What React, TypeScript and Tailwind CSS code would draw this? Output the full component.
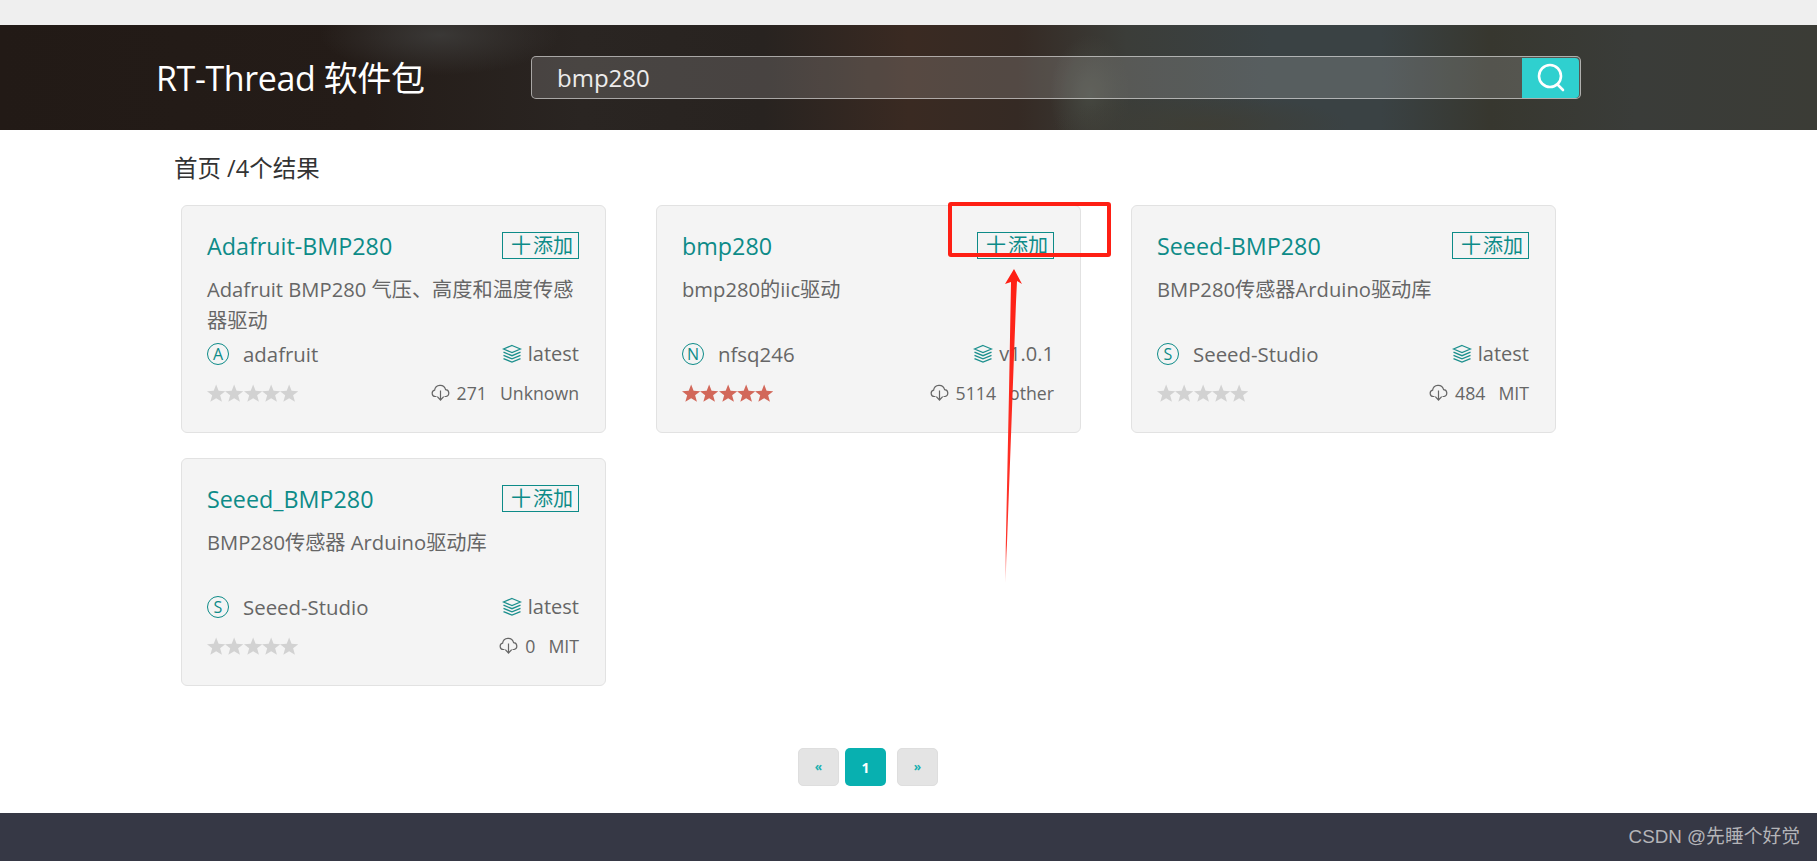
import React from "react";

const FONT = "font-['Open_Sans','Noto_Sans_CJK_SC',sans-serif]";

function Star({ color }: { color: string }) {
  return (
    <svg width="18.3" height="19" viewBox="0 0 18 18" className="block shrink-0">
      <path d="M9 .2l2.4 6.2 6.6.3-5.1 4.1 1.8 6.4L9 13.6l-5.7 3.6 1.8-6.4L0 6.7l6.6-.3z" fill={color} />
    </svg>
  );
}

function Stack() {
  return (
    <svg width="20" height="20" viewBox="0 0 20 20" fill="none" stroke="#1b8f8d" strokeWidth="1.3" className="block shrink-0">
      <path d="M10 1.5L18.5 5 10 8.5 1.5 5z" />
      <path d="M1.5 8.2L10 11.7l8.5-3.5" />
      <path d="M1.5 11.4L10 14.9l8.5-3.5" />
      <path d="M1.5 14.6L10 18.1l8.5-3.5" />
    </svg>
  );
}

function Cloud() {
  return (
    <svg width="19" height="17" viewBox="0 0 19 17" fill="none" stroke="#666" strokeWidth="1.2" className="block shrink-0">
      <path d="M5.5 12.5H4.2a3.2 3.2 0 0 1-.6-6.3 5.6 5.6 0 0 1 11-.6 3.5 3.5 0 0 1 .5 6.9h-1.6" />
      <path d="M9.5 6.5v9.5M6.3 12.6l3.2 3.4 3.2-3.4" />
    </svg>
  );
}

type Pkg = {
  name: string;
  desc: string;
  initial: string;
  author: string;
  version: string;
  downloads: string;
  license: string;
  rated?: boolean;
};

const PACKAGES: Pkg[] = [
  { name: "Adafruit-BMP280", desc: "Adafruit BMP280 气压、高度和温度传感器驱动", initial: "A", author: "adafruit", version: "latest", downloads: "271", license: "Unknown" },
  { name: "bmp280", desc: "bmp280的iic驱动", initial: "N", author: "nfsq246", version: "v1.0.1", downloads: "5114", license: "other", rated: true },
  { name: "Seeed-BMP280", desc: "BMP280传感器Arduino驱动库", initial: "S", author: "Seeed-Studio", version: "latest", downloads: "484", license: "MIT" },
  { name: "Seeed_BMP280", desc: "BMP280传感器 Arduino驱动库", initial: "S", author: "Seeed-Studio", version: "latest", downloads: "0", license: "MIT" },
];

function Card({ p }: { p: Pkg }) {
  return (
    <div className="h-[228px] w-[425px] rounded-[6px] border border-[#e2e2e2] bg-[#f4f4f4] pl-[25px] pr-[26px] pt-[25px]">
      <div className="flex h-[28px] items-center justify-between">
        <span className="relative top-[1px] text-[23.3px] leading-[28px] text-[#0d8b88]">{p.name}</span>
        <span className="flex h-[27px] w-[77px] items-center justify-end border border-[#0d8b88] pr-[5px] text-[20px] leading-[25px] text-[#0d8b88]">
          <span className="mr-[2px] text-[20px]">十</span>添加
        </span>
      </div>
      <p className="mt-[15px] h-[62px] text-[20.2px] leading-[31px] text-[#666]">{p.desc}</p>
      <div className="mt-[4px] flex h-[28px] items-center justify-between">
        <div className="flex items-center">
          <span className="flex h-[22px] w-[22px] items-center justify-center rounded-full border border-[#0d8b88] text-[16px] leading-none text-[#0d8b88]">
            {p.initial}
          </span>
          <span className="ml-[14px] text-[20.4px] text-[#666]">{p.author}</span>
        </div>
        <div className="flex items-center gap-[6px] text-[20px] text-[#666]">
          <Stack />
          <span>{p.version}</span>
        </div>
      </div>
      <div className="mt-[11px] flex h-[28px] items-center justify-between">
        <div className="flex">
          {[0, 1, 2, 3, 4].map((i) => (
            <Star key={i} color={p.rated ? "#d2685a" : "#d2d2d2"} />
          ))}
        </div>
        <div className="flex items-center text-[17.7px] text-[#666]">
          <Cloud />
          <span className="ml-[7px]">{p.downloads}</span>
          <span className="ml-[13px]">{p.license}</span>
        </div>
      </div>
    </div>
  );
}

export default function App() {
  return (
    <div className={`relative flex h-[861px] w-[1817px] flex-col overflow-hidden bg-white ${FONT}`}>
      <div className="h-[25px] bg-[#efefef]" />
      <header className="flex h-[105px] items-center bg-[radial-gradient(ellipse_120px_40px_at_440px_10px,#3a3836,transparent),radial-gradient(ellipse_150px_30px_at_1200px_100px,#3e3e36,transparent),radial-gradient(ellipse_40px_60px_at_1090px_70px,#454740,transparent),linear-gradient(90deg,#221a16_0%,#241c18_20%,#2a2522_32%,#282320_42%,#3a2a22_50%,#352a24_56%,#3b3d39_62%,#3a4244_70%,#3a4244_76%,#37372f_82%,#3a3c39_90%,#3b3c36_100%)]">
        <h1 className="ml-[156px] w-[375px] text-[34px] font-normal leading-none tracking-[-0.4px] text-white">RT-Thread 软件包</h1>
        <div className="flex h-[43px] w-[1050px] items-center rounded-[5px] border border-[#ffffff88] bg-[#ffffff26] pl-[25px] pr-[1px]">
          <span className="flex-1 text-[24px] leading-none text-white/90">bmp280</span>
          <span className="flex h-[40px] w-[57px] items-center justify-center rounded-r-[4px] bg-[#2fd0cf]">
            <svg width="32" height="32" viewBox="0 0 32 32" fill="none" stroke="#fff" strokeWidth="2.6" strokeLinecap="round">
              <circle cx="15" cy="14" r="11" />
              <path d="M23 23l5 5" />
            </svg>
          </span>
        </div>
      </header>

      <main className="flex-1">
        <div className="ml-[174px] mt-[23px] h-[30px] text-[23.5px] leading-[30px] text-[#333]">首页 /4个结果</div>
        <div className="ml-[181px] mt-[22px] grid w-[1375px] grid-cols-[425px_425px_425px] gap-x-[50px] gap-y-[25px]">
          {PACKAGES.map((p) => (
            <Card key={p.name} p={p} />
          ))}
        </div>
        <nav className="ml-[798px] mt-[62px] flex text-[12px] font-bold">
          <span className="flex h-[38px] w-[41px] items-center justify-center rounded-[5px] border border-[#dedede] bg-[#e4e4e4] text-[#19b0b0]">«</span>
          <span className="ml-[6px] flex h-[38px] w-[41px] items-center justify-center rounded-[5px] bg-[#08b0b0] text-[14px] text-white">1</span>
          <span className="ml-[11px] flex h-[38px] w-[41px] items-center justify-center rounded-[5px] border border-[#dedede] bg-[#e4e4e4] text-[#19b0b0]">»</span>
        </nav>
      </main>

      <footer className="flex h-[48px] items-center justify-end bg-[#363845] pr-[17px] font-['Liberation_Sans','Noto_Sans_CJK_SC',sans-serif] text-[18.8px] text-[#b4b4b8]">
        CSDN @先睡个好觉
      </footer>

      {/* Hand-drawn annotation over the page */}
      <div className="absolute left-[948px] top-[202px] h-[55px] w-[163px] rounded-[3px] border-[4px] border-[#fe1f14]" />
      <svg className="absolute left-[995px] top-[262px]" width="36" height="326" viewBox="0 0 36 326">
        <defs>
          <linearGradient id="fade" x1="0" y1="1" x2="0" y2="0">
            <stop offset="0" stopColor="#fe1f14" stopOpacity="0" />
            <stop offset="0.12" stopColor="#fe1f14" stopOpacity="0.9" />
            <stop offset="1" stopColor="#fe1f14" />
          </linearGradient>
        </defs>
        <path d="M19 7L27 22 22 19 21 40 10.5 321 10 321 14 130 16 20 10 22z" fill="url(#fade)" />
      </svg>
    </div>
  );
}
